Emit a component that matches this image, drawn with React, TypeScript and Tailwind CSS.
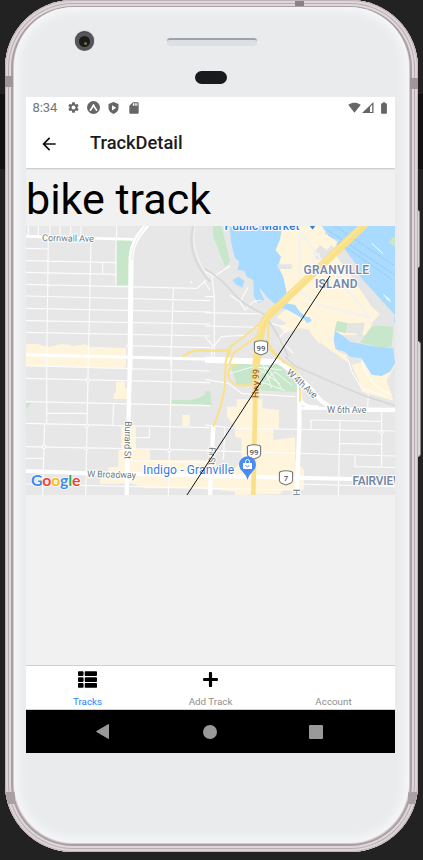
import { FaThList, FaPlus } from "react-icons/fa";
import { MdArrowBack, MdSettings, MdSdCard, MdSignalWifi4Bar, MdBatteryFull } from "react-icons/md";

const line = { fill: "none", stroke: "#fff" } as const;

function Water() {
  return (
    <g transform="translate(205 220) scale(.33333)">
      <path fill="#e5e8e8" d="M0 18H60V100L0 60Z" />
      <path fill="#a9daff" d="M74 18H235L225 60L212 90L228 110L220 140L235 170L245 215L225 258L205 248L185 230L165 205L150 182L125 170L118 152L98 150L103 125L90 115L78 65Z" />
      <path fill="#a9daff" d="M83 180L100 170L118 182L112 203L92 193ZM145 178L163 187L165 213L178 240L160 248L146 228Z" />
      <path fill="#c8e6c9" d="M24 18H50L75 125L60 140L45 102L25 50Z" />
      <path fill="#a9daff" d="M350 18H570V310L520 250L470 200L430 140L395 75Z" />
      <path fill="#c8e6c9" d="M550 66L570 46V82Z" />
      <path fill="#e5e5e5" d="M390 80L410 75L455 135L465 170L570 285L565 320L500 310L430 180Z" />
      <path fill="#fff5dc" d="M232 18H350L365 45L400 62L382 92L440 170L500 260L525 282L500 310L492 345L400 345L385 370L400 395L425 405L435 435L460 480L470 515L565 542L545 480L570 435L545 440L500 460L475 425L440 435L380 400L340 368L325 350L310 328L285 325L240 340L222 320L245 310L215 292L250 260L245 215L235 170L220 140L228 110L212 90L225 60Z" />
      <path fill="#e7e7e7" d="M330 375L345 368L440 435L460 480L470 515L400 500L280 440L260 405L310 400Z" />
      <path fill="#a9daff" d="M386 358L390 332L410 345L435 365L500 378L565 385L570 430L555 455L530 468L500 464L485 440L470 415L435 410L420 395L392 388Z" />
      <path fill="#c8e6c9" d="M495 325L510 316L565 320L560 380L530 382L465 368ZM396 303L429 310L423 340L388 332Z" />
      <path fill="#e3e5e5" d="M429 310L480 308L470 352L450 340L424 338ZM216 133H260V147H220ZM325 100L345 75L365 90L380 75L400 95L370 125L335 118Z" />
      <path fill="#a9daff" d="M225 262L245 250L270 255L285 275L302 290L315 292L320 303L305 310L300 300L275 285L248 270Z" />
      <path stroke="#8dbbe6" strokeWidth="2" strokeDasharray="8 4" fill="none" d="M365 28L570 165M360 38L560 178M390 18L570 138" />
      <path stroke="#fff" strokeWidth="3" fill="none" d="M500 70L535 102M535 224L555 240M542 233L558 246" />
      <path {...line} stroke="#f2f2f2" strokeWidth="6" d="M285 35L352 125M283 40L285 215L340 255L495 292L395 168M320 130L330 105L345 103" />
    </g>
  );
}

function WestStreets() {
  return (
    <g transform="translate(20 220) scale(.33333)">
      <path fill="#fff5dc" d="M18 372L56 372L60 376L90 380L125 372L150 374L155 379L195 373L210 380L310 384L318 382V440L295 447L225 440L200 437L18 433Z" />
      <path fill="#e6e6e6" d="M33 430H48V436H33ZM113 428H123V436H113ZM250 430H270V438H250Z" />
      <path fill="#c8e6c9" d="M287 60H340L328 100V195H290V90Z" />
      <path {...line} stroke="#fcfcfc" strokeWidth="3.4" d="M18 85L85 87M18 122L288 128M18 157L288 163M18 193L530 205L560 180M18 228L570 242M18 265L570 276M18 302L570 312M18 337L570 348M318 377L570 383M25 18V46M55 18V47M90 18V48M120 18V49M152 18V50M183 18V51M290 18V58M248 128V160M288 60V195M85 60L80 435M213 60L205 435M460 205L452 435M550 182L570 210" />
      <path {...line} strokeWidth="8" d="M18 49L340 58" />
      <path {...line} stroke="#d9dcdf" strokeWidth="8" d="M520 18C500 85 530 140 570 185" />
      <path {...line} strokeWidth="2" d="M526 18C510 80 540 140 570 175" />
      <path {...line} strokeWidth="15" d="M330 450L333 120C334 60 365 38 383 12" />
      <path stroke="#dedede" strokeWidth="2" fill="none" d="M335 120C337 66 360 42 380 14" />
      <path {...line} strokeWidth="9" d="M18 404L570 418" />
      <path {...line} stroke="#fbe08a" strokeWidth="7" d="M488 410Q515 390 532 391H625" />
      <circle cx="514" cy="187" r="3" fill="#fff" />
    </g>
  );
}

function SouthWestStreets() {
  return (
    <g transform="translate(20 360) scale(.33333)">
      <path fill="#fff5dc" d="M18 0H318V22L300 26L200 24L125 18L60 20L18 15Z" />
      <path fill="#fff5dc" d="M288 65H314V83H322V117H281V98H288ZM304 200H348V270H390V300H570V385L380 385L330 370L240 373V358L265 342V322L295 320V270H304ZM487 165H509V198H487Z" />
      <path fill="#c8e6c9" d="M455 120H510Q545 115 570 93V135L455 131ZM18 128H34L18 148Z" />
      <path {...line} stroke="#fcfcfc" strokeWidth="3.5" d="M18 17L570 33M18 55L570 68M18 125L570 137M18 190L570 203M18 260L570 271M18 372L570 385M80 0L80 190M74 190L68 405M205 0L197 405M455 0L445 405M80 160L200 160M281 132L278 195M18 295H70M330 233H388V203M330 302L570 308" />
      <path {...line} strokeWidth="13" d="M330 0L320 405" />
      <path {...line} strokeWidth="12" d="M18 333L200 340L570 346" />
      <g fill="#e7e7e7" stroke="#fff" strokeWidth="3">
        <circle cx="204" cy="60" r="5" />
        <circle cx="201" cy="197" r="5" />
        <circle cx="72" cy="261" r="5" />
        <circle cx="199" cy="265" r="5" />
        <circle cx="448" cy="270" r="5" />
      </g>
    </g>
  );
}

function SouthEastStreets() {
  return (
    <g transform="translate(205 360) scale(.33333)">
      <path fill="#c8e6c9" d="M75 10L120 0H210L275 70V96L175 92L150 78L95 72ZM0 95L16 92L20 135H0Z" />
      <path fill="#fff5dc" d="M66 140L95 140V118L172 118V145L222 150V205L205 205V240L270 232V300L297 330V390H235L225 402L90 405V395L20 388L0 388V325H90L110 300V235L90 230V200L66 170Z" />
      <path {...line} stroke="#fcfcfc" strokeWidth="3.5" d="M0 58L70 70L110 100L270 110M0 195L95 205L570 213M0 272L570 288M318 180L530 184M318 180V208M405 250L530 253M450 288V320L570 322M275 372L570 380M405 180L400 405M530 150V320M490 100L488 140M0 385L270 390M60 200L55 300" />
      <path {...line} stroke="#f5faf5" strokeWidth="3" d="M75 40L145 20L230 30M160 50L185 20L230 85M170 75L210 35L260 75M175 15L200 85M155 60L240 92M165 30L225 72" />
      <path {...line} stroke="#d8d8d8" strokeWidth="5" d="M240 -10L270 18L400 75L480 108L570 137" />
      <path {...line} stroke="#fff" strokeWidth="3" d="M430 0L440 35L470 85L540 108M470 0Q490 80 560 105" />
      <path {...line} strokeWidth="13" d="M0 -3L180 3L225 5Q250 20 275 48L335 108Q365 145 410 148L570 150" />
      <path {...line} strokeWidth="18" d="M222 5Q255 20 275 48L325 98" />
      <path {...line} strokeWidth="9" d="M285 70V110Q290 145 340 140M285 145L380 145" />
      <path {...line} strokeWidth="13" d="M283 60V210L275 405" />
      <path {...line} strokeWidth="13" d="M25 195L22 260L15 405" />
      <path {...line} strokeWidth="12" d="M0 348L445 357" />
      <path {...line} stroke="#fbe08a" strokeWidth="6" d="M150 12C100 -5 68 20 70 45C72 75 115 88 150 65M78 -35Q58 20 60 65Q60 110 25 200M190 -35Q220 -5 260 20Q290 40 285 125" />
      <circle cx="530" cy="217" r="5" fill="#e7e7e7" stroke="#fff" strokeWidth="3" />
    </g>
  );
}

function Highway() {
  return (
    <g transform="translate(205 220) scale(.33333)">
      <path {...line} stroke="#fcfcfc" strokeWidth="3.5" d="M0 278L175 282M0 318L160 322M0 350L25 380L50 350L130 345M0 155L20 165L28 230V415M0 230H28M25 170L75 138M75 225L105 245L120 270L145 245L170 240M105 245L130 200M20 380V415M200 310L250 325L220 355L265 400" />
      <path {...line} stroke="#d5d7d8" strokeWidth="5" d="M0 145Q60 185 90 225Q110 250 175 282Q215 330 250 410" />
      <path {...line} strokeWidth="18" d="M0 419L200 426" />
      <path {...line} stroke="#fbe08a" strokeWidth="6" d="M0 392H65Q85 370 120 348L175 302M70 392L60 435M190 310V370Q200 390 240 430M155 350L85 400L72 435" />
      <path {...line} stroke="#fbe08a" strokeWidth="23" d="M485 8L195 282Q175 300 168 335L153 435" />
      <path {...line} stroke="#fff0b5" strokeWidth="2" d="M478 8L190 280Q170 302 160 340" />
      <path {...line} stroke="#fbe08a" strokeWidth="14" d="M153 430L145 825" />
    </g>
  );
}

function Shield({ x, y, label }: { x: number; y: number; label: string }) {
  return (
    <g transform={`translate(${x} ${y})`}>
      <path d="M-5.5 -6.5Q0 -8 5.5 -6.5L6.6 -5.5V2Q6.6 4.5 4.5 5.3L0 7L-4.5 5.3Q-6.6 4.5 -6.6 2V-5.5Z" fill="#fff" stroke="#777" strokeWidth="1.1" />
      <text y="2.8" textAnchor="middle" fontSize="7.8" fontWeight="500" fill="#555">{label}</text>
    </g>
  );
}

function MapLabels() {
  return (
    <g stroke="#fff" strokeWidth="2" paintOrder="stroke" strokeLinejoin="round">
      <g fill="#6b7b83" fontSize="9.3">
        <text x="42" y="241" textLength="52" transform="rotate(1 42 241)">Cornwall Ave</text>
        <text x="87" y="477" textLength="49" transform="rotate(1.5 87 477)">W Broadway</text>
        <text x="327" y="413" textLength="39.5">W 6th Ave</text>
        <text x="286" y="373" textLength="38" transform="rotate(43 286 373)">W 4th Ave</text>
        <text x="125" y="421" textLength="38" transform="rotate(91 125 421)">Burrard St</text>
        <text x="209" y="447" textLength="18" transform="rotate(92 209 447)">Fir St</text>
        <text x="293" y="489" transform="rotate(90 293 489)">H</text>
      </g>
      <text x="258.5" y="398" fontSize="8.8" fill="#85491f" stroke="#fbe08a" textLength="29" transform="rotate(-89 258.5 398)">Hwy 99</text>
      <g fill="#7688a6" fontSize="12" fontWeight="600">
        <text x="303.5" y="273.5" textLength="65.5">GRANVILLE</text>
        <text x="315" y="288" textLength="42.5">ISLAND</text>
        <text x="352.5" y="485" textLength="51">FAIRVIEW</text>
      </g>
      <g fill="#347be0" fontSize="12">
        <text x="224.5" y="230" textLength="75" fontWeight="500">Public Market</text>
        <text x="143" y="473.5" textLength="91">Indigo - Granville</text>
      </g>
    </g>
  );
}

function TrackMap() {
  return (
    <svg className="block h-[269px] w-[369px] shrink-0 font-['Roboto',sans-serif]" viewBox="26 226 369 269">
      <rect x="26" y="226" width="369" height="269" fill="#e7e7e7" />
      <Water />
      <WestStreets />
      <SouthWestStreets />
      <SouthEastStreets />
      <Highway />
      <MapLabels />
      <path d="M309 225H316L312.5 229.5Z" fill="#347be0" />
      <path d="M330 276L187 495" stroke="#111" strokeWidth="1" fill="none" />
      <Shield x={261} y={348} label="99" />
      <Shield x={254} y={452} label="99" />
      <Shield x={286} y={478} label="7" />
      <path d="M247.5 480Q246.5 475.5 242.5 471.5A8.4 8.4 0 1 1 252.5 471.5Q248.5 475.5 247.5 480Z" fill="#4a8af4" />
      <path d="M243 463H252V469H243Z" fill="#fff" />
      <path d="M245.5 463V461.5A2 2 0 0 1 249.5 461.5V463" fill="none" stroke="#fff" />
      <path d="M245.5 465.5Q247.5 468 249.5 465.5" fill="none" stroke="#4a8af4" />
      <g className="font-['Lato',sans-serif]" fontSize="15.8" fontWeight="700">
        <text x="31" y="485.5" textLength="49.5" stroke="#fff" strokeWidth="1.5" paintOrder="stroke">
          <tspan fill="#4285f4">G</tspan><tspan fill="#ea4335">o</tspan><tspan fill="#fbbc05">o</tspan><tspan fill="#4285f4">g</tspan><tspan fill="#34a853">l</tspan><tspan fill="#ea4335">e</tspan>
        </text>
      </g>
    </svg>
  );
}

function StatusBar() {
  return (
    <div className="flex h-[21px] items-center pl-[6.5px] pr-1 text-[#666]">
      <span className="w-[34px] text-[13px] leading-none tracking-[-0.1px] text-[#747474]">8:34</span>
      <MdSettings className="size-[13px]" />
      <svg className="ml-[7px] size-[13px]" viewBox="0 0 13 13">
        <circle cx="6.5" cy="6.5" r="6.5" fill="#666" />
        <path d="M3.5 9Q5.2 7 6.5 4Q7.8 7 9.5 9" fill="none" stroke="#fff" strokeWidth="1.8" strokeLinecap="round" strokeLinejoin="round" />
      </svg>
      <svg className="ml-2 h-3 w-[11px]" viewBox="0 0 11 12">
        <path d="M5.5 0L10.5 2V6Q10.5 9.8 5.5 12Q.5 9.8 .5 6V2Z" fill="#666" />
        <path d="M4 3.2L8.2 5.8L4 8.4Z" fill="#fff" />
      </svg>
      <MdSdCard className="ml-[8px] size-[14px]" />
      <span className="flex-1" />
      <MdSignalWifi4Bar className="size-[13px]" />
      <svg className="ml-px h-[11px] w-[12px]" viewBox="0 0 12 11">
        <path d="M0 11L11.5 0V11Z" fill="#666" />
        <path d="M8 5V10H10.2V2.8Z" fill="#fff" />
      </svg>
      <MdBatteryFull className="ml-[3px] size-[14px]" />
    </div>
  );
}

function Screen() {
  return (
    <div className="flex h-[656px] w-[369px] flex-col overflow-hidden bg-[#f1f1f1]">
      <header className="z-10 h-[71px] shrink-0 bg-white shadow-[0_1px_1.5px_rgba(0,0,0,0.2)]">
        <StatusBar />
        <div className="flex h-[51px] items-center pl-[13px]">
          <MdArrowBack className="size-[20px] text-[#111]" />
          <h1 className="ml-[31px] text-[18.3px] font-medium leading-none text-[#1c1c1e]">TrackDetail</h1>
        </div>
      </header>
      <h2 className="h-[58px] shrink-0 whitespace-nowrap pt-[4px] text-[43px] leading-[55px] text-black">bike track</h2>
      <TrackMap />
      <div className="flex-1" />
      <nav className="grid h-[45px] shrink-0 grid-cols-3 border-y border-[#cfcfcf] bg-white text-[9.8px] leading-none text-[#8e8e8f]">
        <div className="flex flex-col items-center pt-1 text-[#2783f8]">
          <FaThList className="size-[19px] text-black" />
          <span className="mt-[8px]">Tracks</span>
        </div>
        <div className="flex flex-col items-center pt-[5px]">
          <FaPlus className="size-[17px] text-black" />
          <span className="mt-[9px]">Add Track</span>
        </div>
        <div className="flex flex-col items-center pt-[31px]">
          <span>Account</span>
        </div>
      </nav>
      <div className="flex h-[43px] shrink-0 items-center bg-black pl-[70px]">
        <svg className="h-[15px] w-[13px]" viewBox="0 0 13 15"><path d="M12.5 .5V14.5L.5 7.5Z" fill="#999" stroke="#999" strokeLinejoin="round" /></svg>
        <span className="ml-[94px] size-[14px] rounded-full bg-[#999]" />
        <span className="ml-[92px] size-[14px] rounded-[1px] bg-[#999]" />
      </div>
    </div>
  );
}

function Bezel() {
  return (
    <div className="h-[90px]">
      <div className="flex items-center pl-[61px] pt-[25px]">
        <span className="flex size-[19px] items-center justify-center rounded-full border-4 border-[#55565a] bg-[#1b1b1d] shadow-[0_-1px_1px_#333]">
          <span className="ml-px mt-1 size-[3px] rounded-full bg-[#777332]" />
        </span>
        <span className="ml-[73px] h-2 w-[90px] rounded-[3px] border-t-2 border-[#9ba2af] bg-[#dedfe3]" />
      </div>
      <div className="ml-[181px] mt-[20px] h-[13px] w-[32px] rounded-full bg-[#181a1e]" />
    </div>
  );
}

export default function App() {
  return (
    <div className="relative h-[860px] w-[423px] overflow-hidden bg-[#222] font-['Roboto',sans-serif]">
      <div className="absolute left-0 top-[94px] h-[75px] w-full bg-[#111]" />
      <div className="absolute left-[417px] top-[210px] h-[58px] w-[3px] rounded-r-sm border-r border-[#8d8888] bg-[#d8d9d7]" />
      <div className="absolute left-[417px] top-[341px] h-[116px] w-[4px] rounded-r-sm border-r border-[#8d8888] bg-[#d8d9d7]" />
      <div className="relative ml-[5px] h-[852px] w-[413px] overflow-hidden rounded-[68px] bg-[#d4cacd] px-[9px] pb-[9px] pt-[7px] shadow-[inset_0_0_0_1px_#bfb3b7,inset_0_0_0_3px_#ded5d8,inset_0_0_0_4px_#b9adb1,inset_0_0_0_6px_#ded8da,inset_0_0_0_8px_#aaa0a4,inset_0_-3px_2px_#9d9397]">
        <div className="absolute left-[290px] top-[1px] h-[5px] w-[9px] bg-[#8c8186]" />
        <div className="absolute left-0 top-[76px] h-[11px] w-[8px] bg-[#a0969a]" />
        <div className="absolute right-0 top-[78px] h-[11px] w-[8px] bg-[#a0969a]" />
        <div className="absolute left-[1px] top-[792px] h-[12px] w-[9px] bg-[#aaa0a4]" />
        <div className="absolute right-[1px] top-[792px] h-[12px] w-[9px] bg-[#aaa0a4]" />
        <div className="relative h-[836px] w-[395px] rounded-[60px] bg-[#eaebed] shadow-[inset_0_0_8px_5px_#f5f6f8]">
          <Bezel />
          <div className="pl-3">
            <Screen />
          </div>
        </div>
      </div>
    </div>
  );
}
